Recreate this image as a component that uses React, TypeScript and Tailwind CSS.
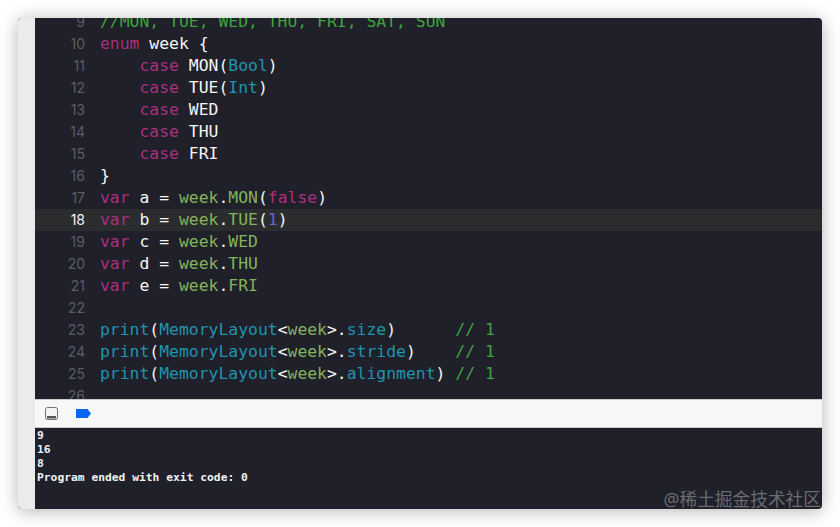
const K = "text-[#a9307f]";
const T = "text-[#f5f5f5]";
const G = "text-[#84b35c]";
const B = "text-[#1f94ad]";
const C = "text-[#3fa33f]";

type Seg = [string, string];

const lines: { n: number; segs: Seg[] }[] = [
  { n: 9, segs: [["//MON, TUE, WED, THU, FRI, SAT, SUN", C]] },
  { n: 10, segs: [["enum", K], [" week {", T]] },
  { n: 11, segs: [["    case", K], [" MON(", T], ["Bool", B], [")", T]] },
  { n: 12, segs: [["    case", K], [" TUE(", T], ["Int", B], [")", T]] },
  { n: 13, segs: [["    case", K], [" WED", T]] },
  { n: 14, segs: [["    case", K], [" THU", T]] },
  { n: 15, segs: [["    case", K], [" FRI", T]] },
  { n: 16, segs: [["}", T]] },
  { n: 17, segs: [["var", K], [" a = ", T], ["week", G], [".", T], ["MON", G], ["(", T], ["false", K], [")", T]] },
  { n: 18, segs: [["var", K], [" b = ", T], ["week", G], [".", T], ["TUE", G], ["(", T], ["1", "text-[#6f5fc0]"], [")", T]] },
  { n: 19, segs: [["var", K], [" c = ", T], ["week", G], [".", T], ["WED", G]] },
  { n: 20, segs: [["var", K], [" d = ", T], ["week", G], [".", T], ["THU", G]] },
  { n: 21, segs: [["var", K], [" e = ", T], ["week", G], [".", T], ["FRI", G]] },
  { n: 22, segs: [] },
  { n: 23, segs: [["print", B], ["(", T], ["MemoryLayout", B], ["<", T], ["week", G], [">.", T], ["size", B], [")", T], ["      // 1", C]] },
  { n: 24, segs: [["print", B], ["(", T], ["MemoryLayout", B], ["<", T], ["week", G], [">.", T], ["stride", B], [")", T], ["    // 1", C]] },
  { n: 25, segs: [["print", B], ["(", T], ["MemoryLayout", B], ["<", T], ["week", G], [">.", T], ["alignment", B], [")", T], [" // 1", C]] },
  { n: 26, segs: [] },
];

const output = ["9", "16", "8", "Program ended with exit code: 0"];

export default function App() {
  return (
    <div className="w-[840px] h-[527px] bg-white p-[18px] overflow-hidden">
      <div className="w-[804px] h-[491px] flex rounded-[4px] overflow-hidden bg-[#1f2029] shadow-[0_2px_18px_rgba(0,0,0,0.3)]">
        <div className="w-[17px] shrink-0 bg-[#ebebeb]" />
        <div className="flex-1 flex flex-col min-w-0">
          {/* editor */}
          <div className="h-[381px] overflow-hidden font-['DejaVu_Sans_Mono',monospace] text-[16.4px] leading-[22px]">
            <div className="-mt-[7px]">
              {lines.map((line) => (
                <div key={line.n} className={`flex h-[22px] ${line.n === 18 ? "bg-[#2b2c2e]" : ""}`}>
                  <span
                    className={`w-[50px] shrink-0 text-right text-[14px] font-['Inter',sans-serif] ${
                      line.n === 18 ? "text-[#f2f2f2]" : "text-[#5c5d65]"
                    }`}
                  >
                    {line.n}
                  </span>
                  <span className="ml-[15px] whitespace-pre">
                    {line.segs.map((s, i) => (
                      <span key={i} className={s[1]}>
                        {s[0]}
                      </span>
                    ))}
                  </span>
                </div>
              ))}
            </div>
          </div>
          {/* debug toolbar */}
          <div className="h-[29px] shrink-0 bg-[#f7f7f7] border-y border-[#c9c9c9] flex items-center pl-[10px] gap-[18px]">
            <svg width="13" height="13" viewBox="0 0 13 13">
              <rect x="0.5" y="0.5" width="12" height="12" rx="2" fill="#f4f4f4" stroke="#707070" />
              <rect x="2" y="9" width="9" height="2.5" fill="#555" />
            </svg>
            <svg width="15" height="9" viewBox="0 0 15 9">
              <path d="M0 0H11.5L15 4.5L11.5 9H0Z" fill="#0a66f5" />
            </svg>
          </div>
          {/* console */}
          <div className="relative flex-1 pt-px pl-[2px] font-['DejaVu_Sans_Mono',monospace] font-bold text-[11.3px] leading-[14px] text-[#f0f0f0]">
            {output.map((o) => (
              <div key={o} className="h-[14px] whitespace-pre">
                {o}
              </div>
            ))}
            <span className="absolute right-[1px] -bottom-[1px] font-['Noto_Sans','Noto_Sans_CJK_SC',sans-serif] font-normal text-[17.7px] leading-[22px] text-[#6a6b70]">
              @稀土掘金技术社区
            </span>
          </div>
        </div>
      </div>
    </div>
  );
}
